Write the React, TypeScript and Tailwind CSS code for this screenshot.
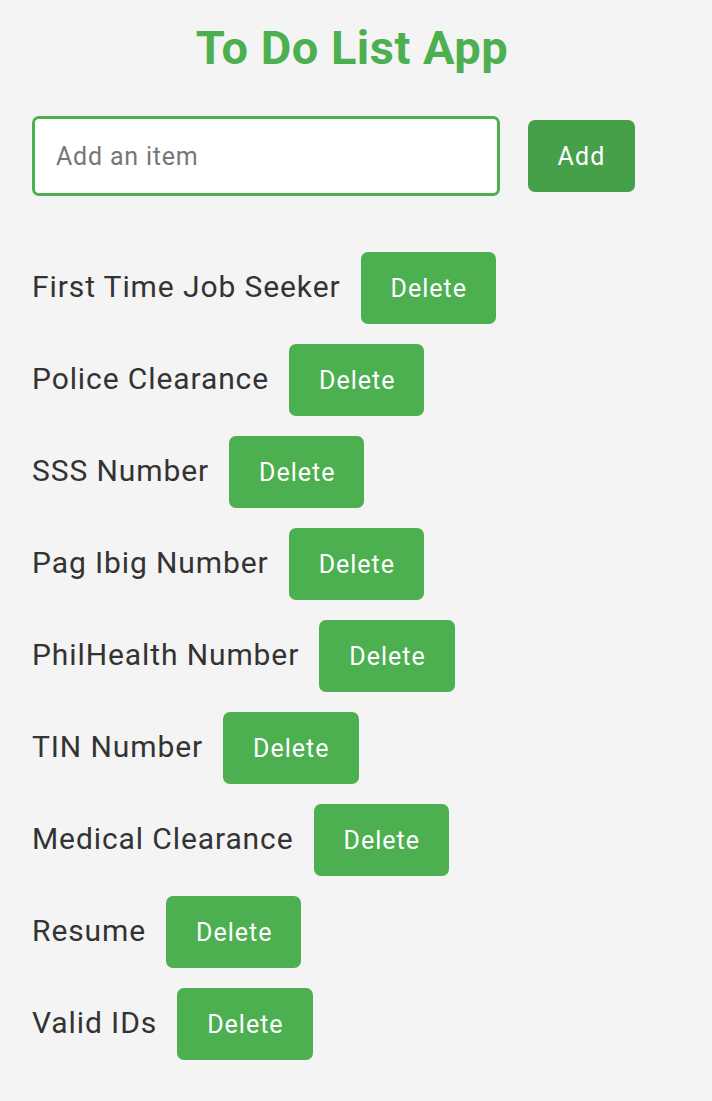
import { useState } from "react";

const initialItems = [
  "First Time Job Seeker",
  "Police Clearance",
  "SSS Number",
  "Pag Ibig Number",
  "PhilHealth Number",
  "TIN Number",
  "Medical Clearance",
  "Resume",
  "Valid IDs",
];

export default function App() {
  const [items, setItems] = useState<string[]>(initialItems);
  const [text, setText] = useState("");

  const addItem = () => {
    if (!text.trim()) return;
    setItems((prev) => [...prev, text.trim()]);
    setText("");
  };

  return (
    <div className="min-h-[1101px] bg-[#f4f4f4] pl-[32px] pr-[40px] pt-[24px] font-['Roboto',sans-serif] text-[#333]">
      <h1 className="text-center text-[47px] font-bold leading-none tracking-[0.5px] text-[#4caf50]">
        To Do List App
      </h1>
      <div className="mt-[45px] flex items-center gap-[28px]">
        <input
          value={text}
          onChange={(e) => setText(e.target.value)}
          placeholder="Add an item"
          className="h-[80px] w-[468px] shrink-0 rounded-[7px] border-[3px] border-[#4caf50] bg-white px-[21px] text-[25px] tracking-[0.8px] text-[#333] outline-none placeholder:text-[#777]"
        />
        <button
          onClick={addItem}
          className="h-[72px] w-[107px] shrink-0 rounded-[7px] bg-[#45a049] pt-[2px] text-[25px] tracking-[1.2px] text-white"
        >
          Add
        </button>
      </div>
      <ul className="mt-[56px] flex flex-col gap-[20px]">
        {items.map((item, i) => (
          <li key={i} className="flex items-center gap-[20px]">
            <span className="pb-[4px] text-[30px] tracking-[0.9px]">{item}</span>
            <button
              onClick={() => setItems((prev) => prev.filter((_, j) => j !== i))}
              className="h-[72px] rounded-[7px] bg-[#4caf50] pl-[30px] pr-[29px] pt-[2px] text-[25px] tracking-[1px] text-white"
            >
              Delete
            </button>
          </li>
        ))}
      </ul>
    </div>
  );
}
